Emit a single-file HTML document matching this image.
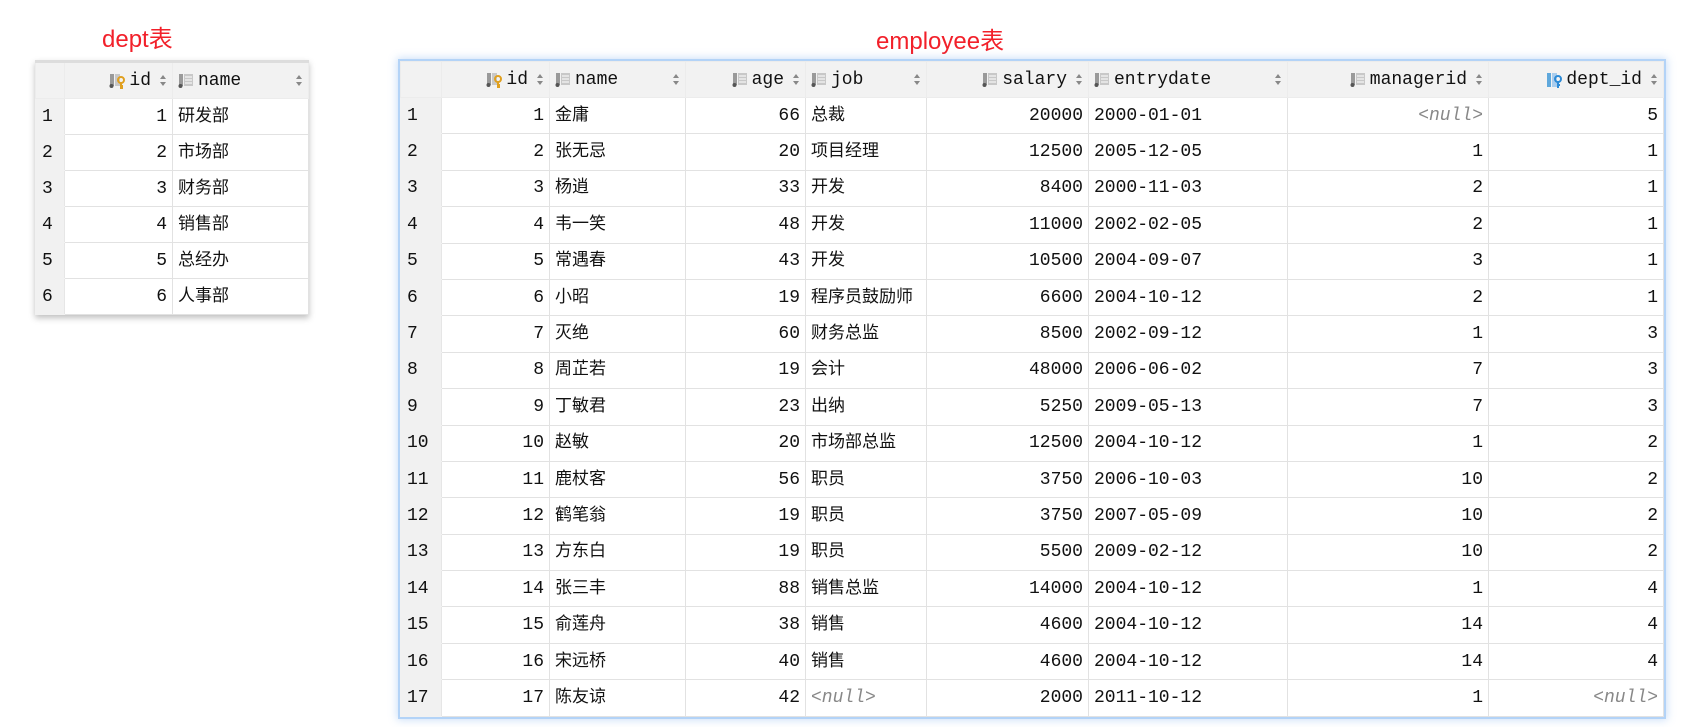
<!DOCTYPE html>
<html><head><meta charset="utf-8"><style>
body{margin:0;width:1685px;height:727px;background:#fff;position:relative;overflow:hidden;font-family:"Liberation Mono","Noto Sans CJK SC",monospace;}
.title{position:absolute;color:#f2202a;font-family:"Liberation Sans","Noto Sans CJK SC",sans-serif;font-size:24px;line-height:28px;}
table{position:absolute;border-collapse:collapse;table-layout:fixed;font-size:18px;color:#111;}
td,th{height:35px;padding:0 5px;border:1px solid #e2e2e2;white-space:nowrap;overflow:hidden;line-height:20px;vertical-align:middle;}
.c{font-family:"Noto Sans CJK SC",sans-serif;font-size:17px;display:inline-block;line-height:20px;vertical-align:top;position:relative;top:-3px;}
th{background:#f2f2f2;font-weight:normal;text-align:left;border-color:#ececec;height:35px;}
td.rn{background:#f1f1f1;text-align:left;padding-left:6px;border-color:#f1f1f1 #e6e6e6 #f1f1f1 #f1f1f1;}
th.rn{background:#f2f2f2;}
td.r{text-align:right}
.null{color:#888;font-style:italic}
.h{display:flex;align-items:center;}
.h .sp{flex:1}
.h .s{margin-left:8px;margin-right:0}
svg{margin-right:4px;flex:none}
#dept{left:35px;top:60px;box-shadow:0 3px 6px rgba(0,0,0,.25);border-top:3px solid #ddd}
#emp{left:400px;top:61px;outline:2px solid #b3d3f7;box-shadow:0 0 8px 3px rgba(140,185,240,.45);}
#emp td{height:35.4px}
</style></head><body>
<div class="title" style="left:102px;top:26px">dept表</div>
<div class="title" style="left:876px;top:28px">employee表</div>

<svg width="0" height="0" style="position:absolute">
<defs>
<g id="tbl"><rect x="1" y="1" width="4" height="12" fill="#9a9a9a"/><rect x="6" y="1" width="9" height="12" fill="#c8c8c8"/><path d="M7 4h7M7 7h7M7 10h7" stroke="#fff" stroke-width="1"/><circle cx="2.5" cy="13" r="2" fill="#555"/></g>
<g id="key"><rect x="1" y="1" width="4" height="12" fill="#9a9a9a"/><rect x="6" y="1" width="5" height="12" fill="#c8c8c8"/><circle cx="2.5" cy="13" r="2" fill="#555"/><circle cx="12" cy="7" r="3" fill="none" stroke="#e0a020" stroke-width="2"/><path d="M12 10v6M12 13h2M12 15h2" stroke="#e0a020" stroke-width="2"/></g>
<g id="fk"><rect x="1" y="1" width="4" height="14" fill="#5fa8dc"/><rect x="6" y="1" width="5" height="14" fill="#a9cdee"/><circle cx="12" cy="7" r="3" fill="none" stroke="#2c8ad6" stroke-width="2"/><path d="M12 10v6M12 13h2" stroke="#2c8ad6" stroke-width="2"/></g>
<g id="srt"><path d="M1 5l3-4 3 4zM1 8l3 4 3-4z" fill="#888"/></g>
</defs></svg>

<table id="dept">
<colgroup><col style="width:29px"><col style="width:108px"><col style="width:136px"></colgroup>
<tr><th class="rn"></th><th><div class="h"><span class="sp"></span><svg width="16" height="16"><use href="#key"/></svg>id<svg class="s" width="8" height="13"><use href="#srt"/></svg></div></th><th><div class="h"><svg width="16" height="16"><use href="#tbl"/></svg>name<span class="sp"></span><svg class="s" width="8" height="13"><use href="#srt"/></svg></div></th></tr>
<tr><td class="rn">1</td><td class="r">1</td><td><span class="c">研发部</span></td></tr>
<tr><td class="rn">2</td><td class="r">2</td><td><span class="c">市场部</span></td></tr>
<tr><td class="rn">3</td><td class="r">3</td><td><span class="c">财务部</span></td></tr>
<tr><td class="rn">4</td><td class="r">4</td><td><span class="c">销售部</span></td></tr>
<tr><td class="rn">5</td><td class="r">5</td><td><span class="c">总经办</span></td></tr>
<tr><td class="rn">6</td><td class="r">6</td><td><span class="c">人事部</span></td></tr>
</table>

<table id="emp">
<colgroup><col style="width:41px"><col style="width:108px"><col style="width:136px"><col style="width:120px"><col style="width:121px"><col style="width:162px"><col style="width:199px"><col style="width:201px"><col style="width:175px"></colgroup>
<tr><th class="rn"></th>
<th><div class="h"><span class="sp"></span><svg width="16" height="16"><use href="#key"/></svg>id<svg class="s" width="8" height="13"><use href="#srt"/></svg></div></th>
<th><div class="h"><svg width="16" height="16"><use href="#tbl"/></svg>name<span class="sp"></span><svg class="s" width="8" height="13"><use href="#srt"/></svg></div></th>
<th><div class="h"><span class="sp"></span><svg width="16" height="16"><use href="#tbl"/></svg>age<svg class="s" width="8" height="13"><use href="#srt"/></svg></div></th>
<th><div class="h"><svg width="16" height="16"><use href="#tbl"/></svg>job<span class="sp"></span><svg class="s" width="8" height="13"><use href="#srt"/></svg></div></th>
<th><div class="h"><span class="sp"></span><svg width="16" height="16"><use href="#tbl"/></svg>salary<svg class="s" width="8" height="13"><use href="#srt"/></svg></div></th>
<th><div class="h"><svg width="16" height="16"><use href="#tbl"/></svg>entrydate<span class="sp"></span><svg class="s" width="8" height="13"><use href="#srt"/></svg></div></th>
<th><div class="h"><span class="sp"></span><svg width="16" height="16"><use href="#tbl"/></svg>managerid<svg class="s" width="8" height="13"><use href="#srt"/></svg></div></th>
<th><div class="h"><span class="sp"></span><svg width="16" height="16"><use href="#fk"/></svg>dept_id<svg class="s" width="8" height="13"><use href="#srt"/></svg></div></th></tr>
<tr><td class="rn">1</td><td class="r">1</td><td><span class="c">金庸</span></td><td class="r">66</td><td><span class="c">总裁</span></td><td class="r">20000</td><td>2000-01-01</td><td class="r null">&lt;null&gt;</td><td class="r">5</td></tr>
<tr><td class="rn">2</td><td class="r">2</td><td><span class="c">张无忌</span></td><td class="r">20</td><td><span class="c">项目经理</span></td><td class="r">12500</td><td>2005-12-05</td><td class="r">1</td><td class="r">1</td></tr>
<tr><td class="rn">3</td><td class="r">3</td><td><span class="c">杨逍</span></td><td class="r">33</td><td><span class="c">开发</span></td><td class="r">8400</td><td>2000-11-03</td><td class="r">2</td><td class="r">1</td></tr>
<tr><td class="rn">4</td><td class="r">4</td><td><span class="c">韦一笑</span></td><td class="r">48</td><td><span class="c">开发</span></td><td class="r">11000</td><td>2002-02-05</td><td class="r">2</td><td class="r">1</td></tr>
<tr><td class="rn">5</td><td class="r">5</td><td><span class="c">常遇春</span></td><td class="r">43</td><td><span class="c">开发</span></td><td class="r">10500</td><td>2004-09-07</td><td class="r">3</td><td class="r">1</td></tr>
<tr><td class="rn">6</td><td class="r">6</td><td><span class="c">小昭</span></td><td class="r">19</td><td><span class="c">程序员鼓励师</span></td><td class="r">6600</td><td>2004-10-12</td><td class="r">2</td><td class="r">1</td></tr>
<tr><td class="rn">7</td><td class="r">7</td><td><span class="c">灭绝</span></td><td class="r">60</td><td><span class="c">财务总监</span></td><td class="r">8500</td><td>2002-09-12</td><td class="r">1</td><td class="r">3</td></tr>
<tr><td class="rn">8</td><td class="r">8</td><td><span class="c">周芷若</span></td><td class="r">19</td><td><span class="c">会计</span></td><td class="r">48000</td><td>2006-06-02</td><td class="r">7</td><td class="r">3</td></tr>
<tr><td class="rn">9</td><td class="r">9</td><td><span class="c">丁敏君</span></td><td class="r">23</td><td><span class="c">出纳</span></td><td class="r">5250</td><td>2009-05-13</td><td class="r">7</td><td class="r">3</td></tr>
<tr><td class="rn">10</td><td class="r">10</td><td><span class="c">赵敏</span></td><td class="r">20</td><td><span class="c">市场部总监</span></td><td class="r">12500</td><td>2004-10-12</td><td class="r">1</td><td class="r">2</td></tr>
<tr><td class="rn">11</td><td class="r">11</td><td><span class="c">鹿杖客</span></td><td class="r">56</td><td><span class="c">职员</span></td><td class="r">3750</td><td>2006-10-03</td><td class="r">10</td><td class="r">2</td></tr>
<tr><td class="rn">12</td><td class="r">12</td><td><span class="c">鹤笔翁</span></td><td class="r">19</td><td><span class="c">职员</span></td><td class="r">3750</td><td>2007-05-09</td><td class="r">10</td><td class="r">2</td></tr>
<tr><td class="rn">13</td><td class="r">13</td><td><span class="c">方东白</span></td><td class="r">19</td><td><span class="c">职员</span></td><td class="r">5500</td><td>2009-02-12</td><td class="r">10</td><td class="r">2</td></tr>
<tr><td class="rn">14</td><td class="r">14</td><td><span class="c">张三丰</span></td><td class="r">88</td><td><span class="c">销售总监</span></td><td class="r">14000</td><td>2004-10-12</td><td class="r">1</td><td class="r">4</td></tr>
<tr><td class="rn">15</td><td class="r">15</td><td><span class="c">俞莲舟</span></td><td class="r">38</td><td><span class="c">销售</span></td><td class="r">4600</td><td>2004-10-12</td><td class="r">14</td><td class="r">4</td></tr>
<tr><td class="rn">16</td><td class="r">16</td><td><span class="c">宋远桥</span></td><td class="r">40</td><td><span class="c">销售</span></td><td class="r">4600</td><td>2004-10-12</td><td class="r">14</td><td class="r">4</td></tr>
<tr><td class="rn">17</td><td class="r">17</td><td><span class="c">陈友谅</span></td><td class="r">42</td><td class="null">&lt;null&gt;</td><td class="r">2000</td><td>2011-10-12</td><td class="r">1</td><td class="r null">&lt;null&gt;</td></tr>
</table>
</body></html>
